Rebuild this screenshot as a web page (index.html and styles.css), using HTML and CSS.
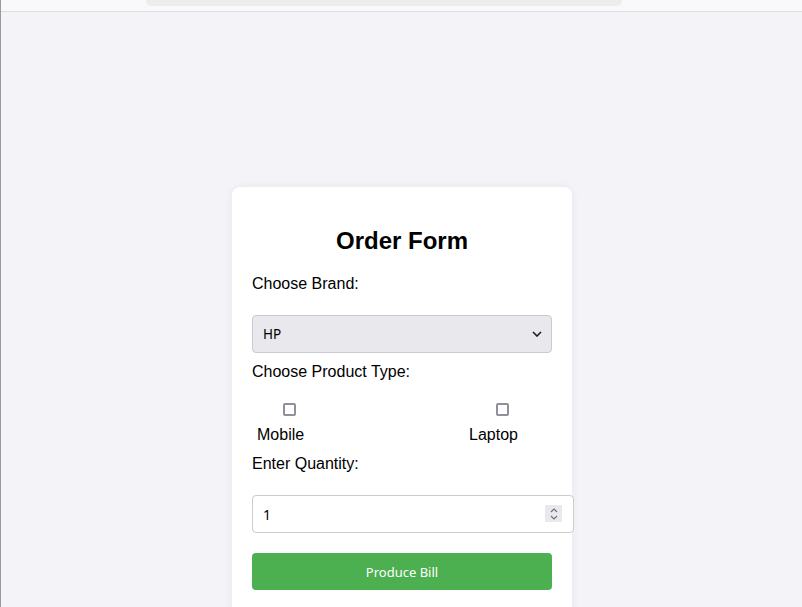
FILE: index.html
```html
<!DOCTYPE html>
<html>
<head>
<meta charset="utf-8">
<title>Order Form</title>
<link rel="stylesheet" href="styles.css">
</head>
<body>
<div class="topbar"><div class="urlbar"></div></div>
<main class="page">
  <form class="card">
    <h2 class="title">Order Form</h2>
    <label class="field-label" for="brand">Choose Brand:</label>
    <div class="select-wrap">
      <select id="brand" class="select">
        <option>HP</option>
        <option>Dell</option>
        <option>Apple</option>
      </select>
      <svg class="chevron" width="10" height="6" viewBox="0 0 10 6"><path d="M1 1l4 4 4-4" fill="none" stroke="#1c1b22" stroke-width="1.6"/></svg>
    </div>
    <label class="field-label">Choose Product Type:</label>
    <div class="check-group">
      <label class="check-item"><input type="checkbox" class="check"><span>Mobile</span></label>
      <label class="check-item"><input type="checkbox" class="check"><span>Laptop</span></label>
    </div>
    <label class="field-label" for="qty">Enter Quantity:</label>
    <div class="number-wrap">
      <input id="qty" type="number" class="number" value="1">
      <div class="spinner">
        <svg width="10" height="14" viewBox="0 0 10 14"><path d="M2 5l3-3 3 3M2 9l3 3 3-3" fill="none" stroke="#6d6d75" stroke-width="1.1"/></svg>
      </div>
    </div>
    <button type="button" class="submit">Produce Bill</button>
  </form>
</main>
</body>
</html>
```
FILE: styles.css
```css
html, body {
  margin: 0;
  padding: 0;
}
body {
  background: #f4f4f8;
  font-family: "Liberation Sans", Arial, sans-serif;
  color: #000;
  height: 607px;
  overflow: hidden;
  border-left: 1px solid #9a9a9a;
  box-sizing: border-box;
}
.topbar {
  height: 11px;
  background: #f9f9fb;
  border-bottom: 1px solid #dcdce0;
  padding-left: 145px;
}
.urlbar {
  width: 476px;
  height: 6px;
  background: #ededed;
  border-radius: 0 0 5px 5px;
}
.page {
  display: flex;
  justify-content: center;
  padding-top: 175px;
  padding-left: 1px;
}
.card {
  display: flex;
  flex-direction: column;
  width: 300px;
  padding: 20px;
  background: #fff;
  border-radius: 8px;
  box-shadow: 0 0 8px rgba(0, 0, 0, 0.06);
  height: 420px;
}
.title {
  font-size: 24px;
  font-weight: bold;
  text-align: center;
  margin: 20px 0;
  line-height: 27.6px;
}
.field-label {
  display: block;
  font-size: 16px;
  line-height: 18.4px;
  margin-bottom: 12px;
}
.select-wrap {
  position: relative;
  margin: 10px 0;
}
.select {
  appearance: none;
  -webkit-appearance: none;
  display: block;
  width: 100%;
  height: 38px;
  box-sizing: border-box;
  padding: 0 10px;
  background: #e9e9ed;
  border: 1px solid #cacad0;
  border-radius: 4px;
  font-family: "Noto Sans", sans-serif;
  font-size: 13.5px;
  color: #000;
}
.chevron {
  position: absolute;
  right: 10px;
  top: 16px;
}
.check-group {
  display: flex;
  justify-content: space-between;
  padding: 0 34px 0 5px;
  margin-bottom: 10px;
}
.check-item {
  display: flex;
  flex-direction: column;
  align-items: center;
  font-size: 16px;
  line-height: 18.4px;
}
.check {
  appearance: none;
  -webkit-appearance: none;
  width: 13px;
  height: 13px;
  box-sizing: border-box;
  border: 2px solid #8f8f9d;
  border-radius: 2px;
  background: #fff;
  margin: 10px 0 10px 18px;
}
.number-wrap {
  position: relative;
  margin: 10px 0;
}
.number {
  display: block;
  width: 100%;
  height: 16px;
  padding: 10px;
  border: 1px solid #ccc;
  border-radius: 4px;
  font-family: "Noto Sans", sans-serif;
  font-size: 14px;
  color: #000;
  outline: none;
  -moz-appearance: textfield;
}
.number::-webkit-inner-spin-button,
.number::-webkit-outer-spin-button {
  -webkit-appearance: none;
  margin: 0;
}
.spinner {
  position: absolute;
  left: 293px;
  top: 10px;
  width: 17px;
  height: 17px;
  background: #e9e9ed;
  display: flex;
  align-items: center;
  justify-content: center;
}
.submit {
  display: block;
  width: 100%;
  height: 37px;
  margin-top: 10px;
  background: #4caf50;
  color: #fff;
  border: none;
  border-radius: 4px;
  font-family: "Noto Sans", sans-serif;
  font-size: 13px;
}
```
